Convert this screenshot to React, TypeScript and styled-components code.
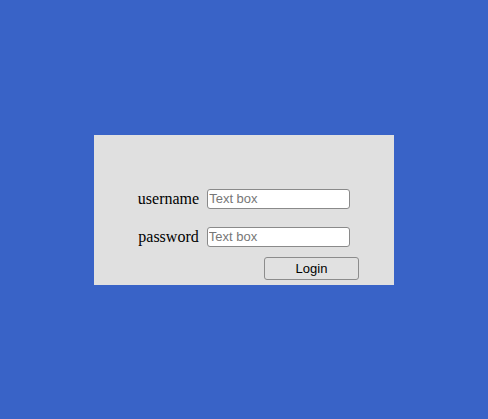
import React from 'react';
import styled, { createGlobalStyle } from 'styled-components';

const GlobalStyle = createGlobalStyle`
  html, body {
    margin: 0;
    padding: 0;
    background: #3963c7;
  }
  #root {
    min-height: 100vh;
  }
`

const Page = styled.div`
  min-height: 100vh;
  display: flex;
  align-items: center;
  justify-content: center;
`

const Panel = styled.form`
  width: 300px;
  height: 150px;
  box-sizing: border-box;
  padding-top: 54px;
  background: #e0e0e0;
  display: flex;
  flex-direction: column;
`

const Row = styled.div<{ $gap?: number }>`
  display: flex;
  justify-content: center;
  align-items: center;
  gap: 8px;
  margin-bottom: ${p => p.$gap ?? 0}px;
`

const Label = styled.label`
  font-family: "Liberation Serif", "Times New Roman", serif;
  font-size: 16px;
  color: #000;
  line-height: 18px;
`

const TextBox = styled.input`
  box-sizing: border-box;
  width: 143px;
  height: 20px;
  margin: 0;
  padding: 0 2px 0 1px;
  border: 1px solid #8a8a8a;
  border-radius: 3px;
  background: #fff;
  font-family: "Liberation Sans", Arial, sans-serif;
  font-size: 13px;
  color: #000;
  outline: none;

  &::placeholder {
    color: #777;
  }
`

const Actions = styled.div`
  display: flex;
  justify-content: flex-end;
  padding-right: 35px;
`

const Button = styled.button`
  box-sizing: border-box;
  width: 95px;
  height: 23px;
  margin: 0;
  padding: 0;
  border: 1px solid #8c8c8c;
  border-radius: 3px;
  background: #e1e1e1;
  font-family: "Liberation Sans", Arial, sans-serif;
  font-size: 13px;
  color: #000;
  cursor: pointer;
`

const App: React.FC = () => {
  return (
    <>
      <GlobalStyle />
      <Page>
        <Panel onSubmit={e => e.preventDefault()}>
          <Row $gap={18}>
            <Label htmlFor="username">username</Label>
            <TextBox id="username" type="text" placeholder="Text box" />
          </Row>
          <Row $gap={10}>
            <Label htmlFor="password">password</Label>
            <TextBox id="password" type="password" placeholder="Text box" />
          </Row>
          <Actions>
            <Button type="submit">Login</Button>
          </Actions>
        </Panel>
      </Page>
    </>
  );
}

export default App;
